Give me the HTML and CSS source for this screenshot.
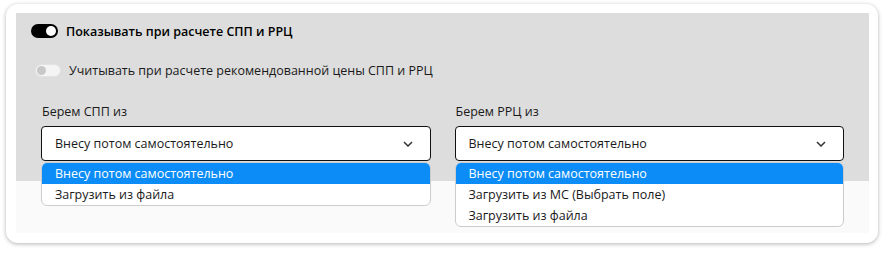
FILE: index.html
```html
<!DOCTYPE html>
<html lang="ru">
  <head>
    <meta charset="UTF-8" />
    <meta name="viewport" content="width=device-width, initial-scale=1.0" />
    <title>Настройки СПП и РРЦ</title>
    <link rel="stylesheet" href="styles.css">
  </head>

  <body>
    <div class="card">
      <div class="panel">
        <div class="panel-top">
          <div class="switch-row">
            <span class="switch switch-on"><span class="knob"></span></span>
            <span class="switch-label bold">Показывать при расчете СПП и РРЦ</span>
          </div>
          <div class="switch-row switch-row-2">
            <span class="switch switch-off"><span class="knob"></span></span>
            <span class="switch-label">Учитывать при расчете рекомендованной цены СПП и РРЦ</span>
          </div>

          <div class="fields">
            <div class="field">
              <div class="field-label">Берем СПП из</div>
              <div class="select">
                <span>Внесу потом самостоятельно</span>
                <svg class="chevron" width="10" height="6" viewBox="0 0 10 6">
                  <path d="M1 1 L5 5 L9 1" fill="none" stroke="#333" stroke-width="1.5" />
                </svg>
                <ul class="options">
                  <li class="active">Внесу потом самостоятельно</li>
                  <li>Загрузить из файла</li>
                </ul>
              </div>
            </div>
            <div class="field">
              <div class="field-label">Берем РРЦ из</div>
              <div class="select">
                <span>Внесу потом самостоятельно</span>
                <svg class="chevron" width="10" height="6" viewBox="0 0 10 6">
                  <path d="M1 1 L5 5 L9 1" fill="none" stroke="#333" stroke-width="1.5" />
                </svg>
                <ul class="options">
                  <li class="active">Внесу потом самостоятельно</li>
                  <li>Загрузить из МС (Выбрать поле)</li>
                  <li>Загрузить из файла</li>
                </ul>
              </div>
            </div>
          </div>
        </div>
      </div>
    </div>
  </body>
</html>
```

FILE: styles.css
```css
body {
  margin: 0;
  background-color: #fff;
  font-family: "Open Sans", Arial, sans-serif;
  font-size: 12.5px;
  color: #1a1a1a;
}

.card {
  margin: 4px 7px 10px 6px;
  padding: 9px 9px 10px 10px;
  background-color: #fff;
  border-radius: 12px;
  box-shadow: 0 1px 4px rgba(0, 0, 0, 0.3);
}

.panel {
  height: 220px;
  background-color: #fafafa;
}

.panel-top {
  height: 168px;
  box-sizing: border-box;
  padding: 8px 25px 0 15px;
  background-color: #ddd;
}

.switch-row {
  display: flex;
  align-items: center;
  height: 20px;
}

.switch-row-2 {
  margin-top: 19px;
  padding-left: 4px;
}

.switch {
  position: relative;
  display: inline-block;
  width: 27px;
  height: 14px;
  border-radius: 7px;
  box-sizing: border-box;
  margin-right: 8px;
}

.switch-on {
  background-color: #000;
}

.switch-off {
  width: 26px;
  height: 13px;
  background-color: #f4f4f4;
  border: 1px solid #e2e2e2;
}

.knob {
  position: absolute;
  top: 2px;
  width: 10px;
  height: 10px;
  border-radius: 50%;
}

.switch-on .knob {
  right: 2px;
  background-color: #fff;
}

.switch-off .knob {
  top: 1px;
  left: 1px;
  width: 9px;
  height: 9px;
  background-color: #c8c8c8;
}

.bold {
  font-weight: 600;
  color: #000;
}

.fields {
  display: grid;
  grid-template-columns: 1fr 1fr;
  gap: 24px;
  margin-top: 22px;
  padding-left: 10px;
}

.field-label {
  line-height: 20px;
  margin-bottom: 4px;
  padding-left: 1px;
}

.select {
  position: relative;
  display: flex;
  align-items: center;
  justify-content: space-between;
  height: 35px;
  box-sizing: border-box;
  padding: 0 17px 0 13px;
  background-color: #fff;
  border: 1px solid #111;
  border-radius: 4px;
}

.options {
  position: absolute;
  top: 35px;
  left: -1px;
  right: -1px;
  margin: 0;
  padding: 0;
  list-style: none;
  background-color: #fff;
  border: 1px solid #ccc;
  border-radius: 6px;
  overflow: hidden;
}

.options li {
  height: 21px;
  line-height: 21px;
  padding-left: 13px;
}

.options li.active {
  background-color: #0b8cf6;
  color: #fff;
}
```
